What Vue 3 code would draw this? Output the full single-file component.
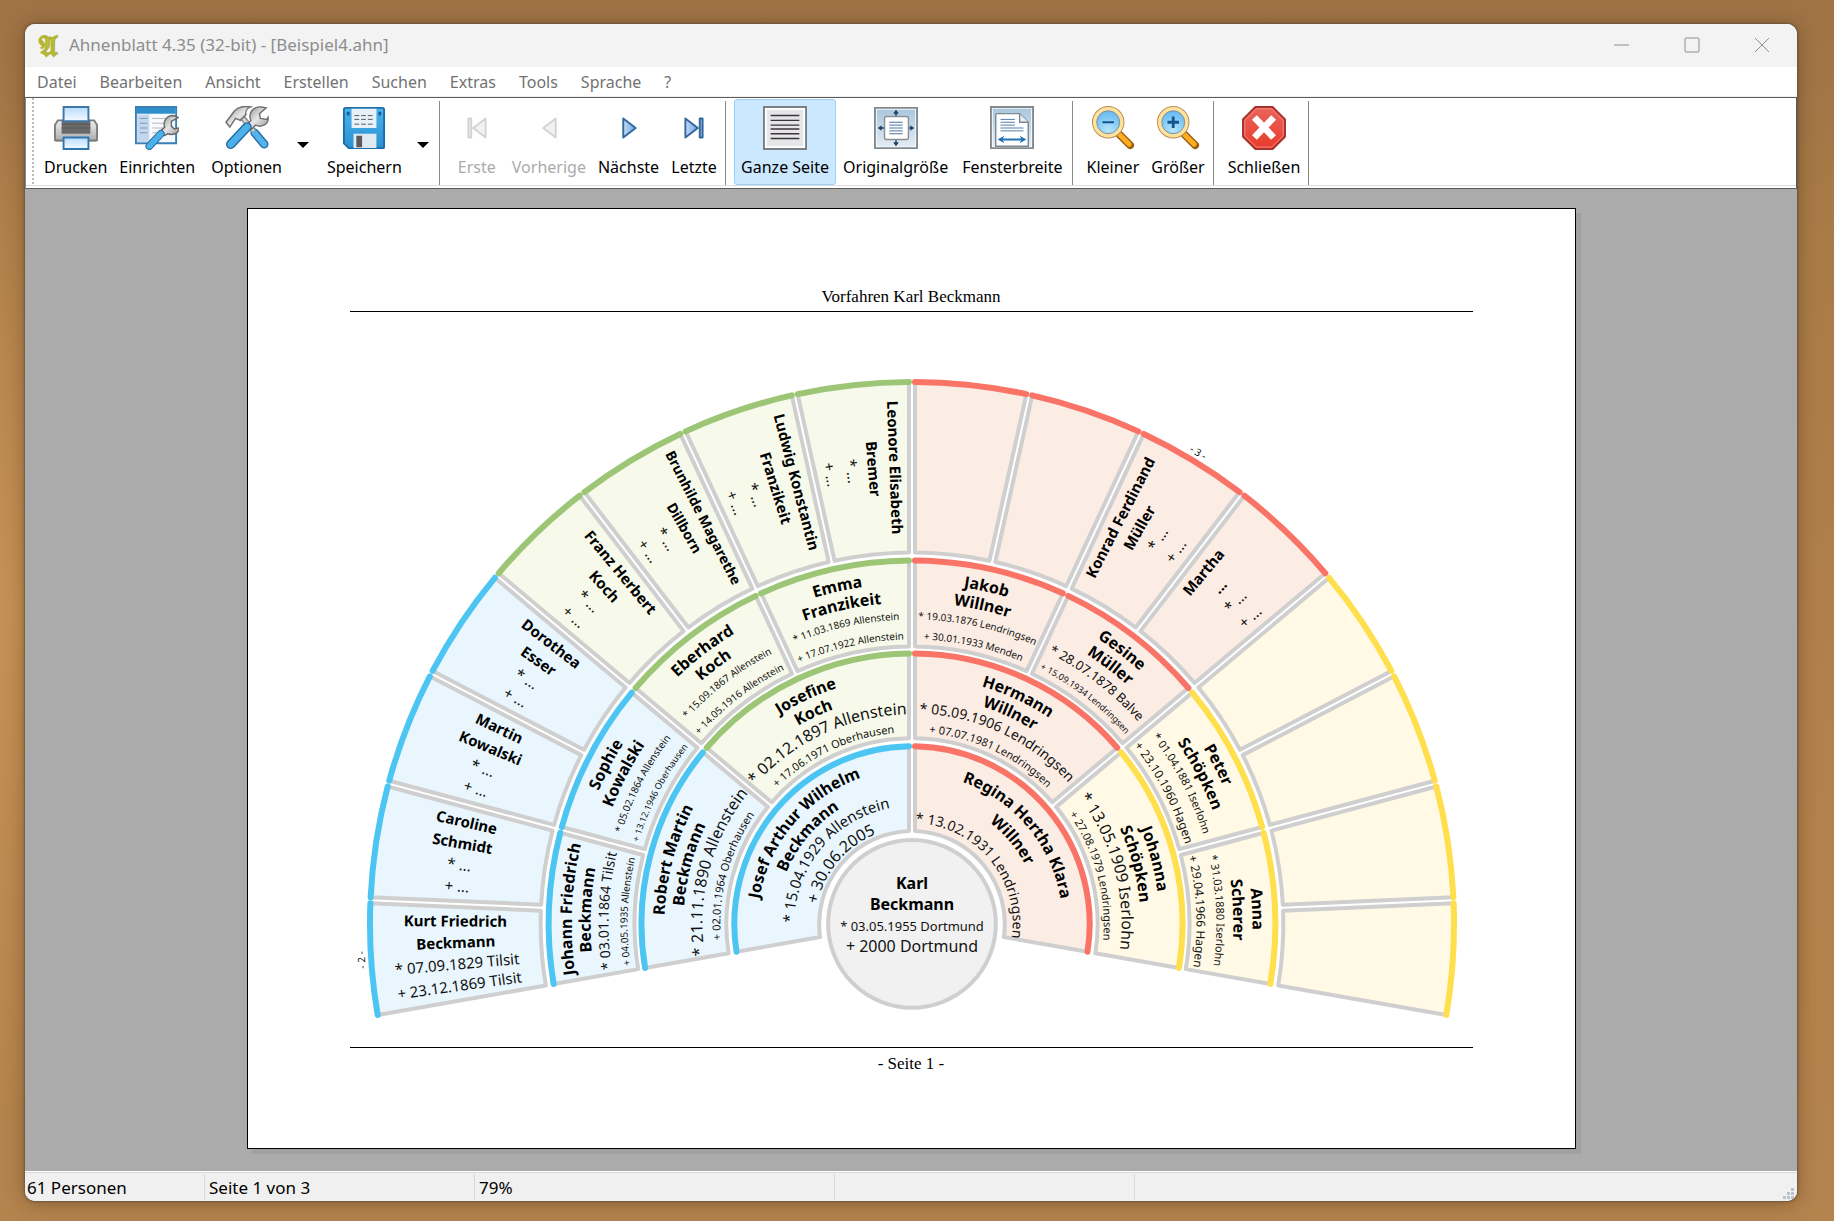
<script setup>
import {ref} from 'vue';

const menus = ['Datei', 'Bearbeiten', 'Ansicht', 'Erstellen', 'Suchen', 'Extras', 'Tools', 'Sprache', '?'];

const toolGroups = [
  [
    {id: 'print', label: 'Drucken'},
    {id: 'setup', label: 'Einrichten'},
    {id: 'options', label: 'Optionen', menu: true},
    {id: 'save', label: 'Speichern', menu: true},
  ],
  [
    {id: 'first', label: 'Erste', disabled: true},
    {id: 'previous', label: 'Vorherige', disabled: true},
    {id: 'next', label: 'Nächste'},
    {id: 'last', label: 'Letzte'},
  ],
  [
    {id: 'page', label: 'Ganze Seite', view: true},
    {id: 'original', label: 'Originalgröße', view: true},
    {id: 'width', label: 'Fensterbreite', view: true},
  ],
  [
    {id: 'smaller', label: 'Kleiner'},
    {id: 'larger', label: 'Größer'},
  ],
  [{id: 'close', label: 'Schließen'}],
];

const activeView = ref('page');

// [name lines, date lines, font sizes of the date lines, font size of the name]
const generations = [
  {
    inner: 93,
    outer: 178,
    people: [
      [['Josef Arthur Wilhelm', 'Beckmann'], ['* 15.04.1929 Allenstein', '+ 30.06.2005'], [15, 16]],
      [['Regina Hertha Klara', 'Willner'], ['* 13.02.1931 Lendringsen'], [14]],
    ],
  },
  {
    inner: 186,
    outer: 271,
    people: [
      [['Robert Martin', 'Beckmann'], ['* 21.11.1890 Allenstein', '+ 02.01.1964 Oberhausen'], [16, 11]],
      [['Josefine', 'Koch'], ['* 02.12.1897 Allenstein', '+ 17.06.1971 Oberhausen'], [16, 11]],
      [['Hermann', 'Willner'], ['* 05.09.1906 Lendringsen', '+ 07.07.1981 Lendringsen'], [14, 11]],
      [['Johanna', 'Schöpken'], ['* 13.05.1909 Iserlohn', '+ 27.08.1979 Lendringsen'], [16, 11]],
    ],
  },
  {
    inner: 278,
    outer: 364,
    people: [
      [['Johann Friedrich', 'Beckmann'], ['* 03.01.1864 Tilsit', '+ 04.05.1935 Allenstein'], [14, 10]],
      [['Sophie', 'Kowalski'], ['* 05.02.1864 Allenstein', '+ 13.12.1946 Oberhausen'], [10, 9]],
      [['Eberhard', 'Koch'], ['* 15.09.1867 Allenstein', '+ 14.05.1916 Allenstein'], [10, 10]],
      [['Emma', 'Franzikeit'], ['* 11.03.1869 Allenstein', '+ 17.07.1922 Allenstein'], [10, 10]],
      [['Jakob', 'Willner'], ['* 19.03.1876 Lendringsen', '+ 30.01.1933 Menden'], [10, 10]],
      [['Gesine', 'Müller'], ['* 28.07.1878 Balve', '+ 15.09.1934 Lendringsen'], [13, 9]],
      [['Peter', 'Schöpken'], ['* 01.04.1881 Iserlohn', '+ 23.10.1960 Hagen'], [11, 12]],
      [['Anna', 'Scherer'], ['* 31.03.1880 Iserlohn', '+ 29.04.1966 Hagen'], [11, 12]],
    ],
  },
  {
    inner: 372,
    outer: 543,
    radial: true,
    people: [
      [['Kurt Friedrich', 'Beckmann'], ['* 07.09.1829 Tilsit', '+ 23.12.1869 Tilsit'], [15, 15]],
      [['Caroline', 'Schmidt'], ['* ...', '+ ...'], [15, 15]],
      [['Martin', 'Kowalski'], ['* ...', '+ ...'], [15, 15]],
      [['Dorothea', 'Esser'], ['* ...', '+ ...'], [15, 15]],
      [['Franz Herbert', 'Koch'], ['* ...', '+ ...'], [15, 15]],
      [['Brunhilde Magarethe', 'Dillborn'], ['* ...', '+ ...'], [15, 15], 14],
      [['Ludwig Konstantin', 'Franzikeit'], ['* ...', '+ ...'], [15, 15]],
      [['Leonore Elisabeth', 'Bremer'], ['* ...', '+ ...'], [15, 15]],
      null,
      null,
      [['Konrad Ferdinand', 'Müller'], ['* ...', '+ ...'], [15, 15]],
      [['Martha', '...'], ['* ...', '+ ...'], [15, 15]],
      null,
      null,
      null,
      null,
    ],
  },
];

const FAN_START = -10;
const FAN_SWEEP = 200;
const GAP = 3;
const LINE_STEP = 2.7;

// Angles run clockwise, 0 is on the left and 90 at the top
function point(radius, angle) {
  const rad = (angle * Math.PI) / 180;
  return `${(-radius * Math.cos(rad)).toFixed(2)} ${(-radius * Math.sin(rad)).toFixed(2)}`;
}

function inset(radius) {
  return (Math.asin(GAP / radius) * 180) / Math.PI;
}

function arc(radius, from, to) {
  return `M ${point(radius, from)} A ${radius} ${radius} 0 0 1 ${point(radius, to)}`;
}

function sector(inner, outer, from, to) {
  const o = inset(outer);
  const i = inset(inner);
  return `${arc(outer, from + o, to - o)} L ${point(inner, to - i)} A ${inner} ${inner} 0 0 0 ${point(inner, from + i)} Z`;
}

function buildLines(person, gen, from, to) {
  if (!person) return [];
  const [names, dates, sizes, nameSize = gen.radial ? 15 : 16] = person;
  const lines = [
    ...names.map((text) => ({text, size: nameSize, bold: true})),
    ...dates.map((text, i) => ({text, size: sizes[i], bold: false})),
  ];
  const mid = (from + to) / 2;
  const offsets = lines.length === 3 ? [21, 44, 72] : [17, 36, 55, 75];
  return lines.map((line, i) => {
    const drop = Math.round(line.size * 0.36);
    if (gen.radial) {
      const shift = (1.5 - i) * LINE_STEP;
      const radius = (gen.inner + gen.outer) / 2;
      const transform = mid < 90
        ? `rotate(${mid + shift}) translate(${-radius} ${drop})`
        : `rotate(${mid - shift - 180}) translate(${radius} ${drop})`;
      return {...line, transform};
    }
    return {...line, path: arc(gen.outer - offsets[i] - drop, from - 5, to + 5)};
  });
}

const branches = ['blue', 'green', 'red', 'yellow'];

const cells = generations.flatMap((gen, g) => {
  const step = FAN_SWEEP / gen.people.length;
  return gen.people.map((person, n) => {
    const from = FAN_START + n * step;
    const to = from + step;
    const branch = g === 0 ? branches[n * 2] : branches[Math.floor((n * 4) / gen.people.length)];
    return {
      id: `cell-${g}-${n}`,
      branch,
      shape: sector(gen.inner, gen.outer, from, to),
      edge: arc(gen.outer, from + inset(gen.outer), to - inset(gen.outer)),
      lines: buildLines(person, gen, from, to),
    };
  });
});

const status = ['61 Personen', 'Seite 1 von 3', '79%', '', ''];
</script>

<template>
  <svg class="sprite" aria-hidden="true">
    <defs>
      <linearGradient id="g-paper" x1="0" y1="0" x2="0" y2="1">
        <stop offset="0" stop-color="#b9dcff"/>
        <stop offset="1" stop-color="#f4faff"/>
      </linearGradient>
      <linearGradient id="g-metal" x1="0" y1="0" x2="0" y2="1">
        <stop offset="0" stop-color="#f2f2f2"/>
        <stop offset="1" stop-color="#a9a9a9"/>
      </linearGradient>
      <linearGradient id="g-steel" x1="0" y1="0" x2="1" y2="1">
        <stop offset="0" stop-color="#8b8b8b"/>
        <stop offset="0.5" stop-color="#e6e6e6"/>
        <stop offset="1" stop-color="#9a9a9a"/>
      </linearGradient>
      <linearGradient id="g-blue" x1="0" y1="0" x2="0" y2="1">
        <stop offset="0" stop-color="#4cb4ee"/>
        <stop offset="1" stop-color="#2b8fd0"/>
      </linearGradient>
      <linearGradient id="g-frame" x1="0" y1="0" x2="0" y2="1">
        <stop offset="0" stop-color="#aac8de"/>
        <stop offset="1" stop-color="#e2ebf2"/>
      </linearGradient>
      <linearGradient id="g-nav" x1="0" y1="0" x2="1" y2="0">
        <stop offset="0" stop-color="#c3dcf8"/>
        <stop offset="1" stop-color="#6ea3e0"/>
      </linearGradient>
      <linearGradient id="g-red" x1="0" y1="0" x2="0" y2="1">
        <stop offset="0" stop-color="#e8655c"/>
        <stop offset="1" stop-color="#ea3a2a"/>
      </linearGradient>
      <radialGradient id="g-lens" cx="0.5" cy="0.8" r="0.8">
        <stop offset="0" stop-color="#b5e6ff"/>
        <stop offset="1" stop-color="#5bb4ee"/>
      </radialGradient>
    </defs>

    <symbol id="icon-print" viewBox="0 0 46 46">
      <path d="M4 14h38l4 6v15a2 2 0 0 1-2 2H2a2 2 0 0 1-2-2V20z" fill="url(#g-metal)"/>
      <path d="M4 15h38l3 5v15a1 1 0 0 1-1 1H2a1 1 0 0 1-1-1V20z" fill="none" stroke="#7d7d7d" stroke-width="2"/>
      <path d="M8 15h30v14H8z" fill="#6a6a6a"/>
      <path d="M8 19h30M8 23h30" stroke="#585858"/>
      <path d="M10 1h26v15H10z" fill="url(#g-paper)" stroke="#3d76a8" stroke-width="2"/>
      <path d="M10 33h26v12H10z" fill="url(#g-paper)" stroke="#2f75ae" stroke-width="2"/>
    </symbol>

    <symbol id="icon-wrench-small" viewBox="0 0 46 46">
      <path d="M27 26 31 22c-2-6 2-12 9-12l5 2-7 4v5l3 3 5-1c0 6-7 8-12 6l-3 2z" fill="url(#g-steel)" stroke="#686868" stroke-width="1.5"/>
      <path d="M27 29 15 42" stroke="#226ca3" stroke-width="8" stroke-linecap="round"/>
      <path d="M27 29 15 42" stroke="#4db0e8" stroke-width="6" stroke-linecap="round"/>
    </symbol>

    <symbol id="icon-setup" viewBox="0 0 46 46">
      <path d="M1 1h42v38H1z" fill="#f6fafe" stroke="#3a7fb2" stroke-width="2"/>
      <path d="M2 2h40v6H2z" fill="#2e8fcc"/>
      <path d="M2 9h13v29H2z" fill="#c3d8ee"/>
      <path d="M5 13h8M5 18h8M5 23h8M5 28h8" stroke="#7b93a8"/>
      <path d="M18 13h20M18 18h14M18 23h11M18 28h8" stroke="#b4b4b4"/>
      <use href="#icon-wrench-small"/>
    </symbol>

    <symbol id="icon-options" viewBox="0 0 46 46">
      <path d="M31 28 41 40" stroke="#2570a8" stroke-width="9" stroke-linecap="round"/>
      <path d="M31 28 41 40" stroke="#53b3ea" stroke-width="6" stroke-linecap="round"/>
      <path d="M18 12 30 26" stroke="#8a8a8a" stroke-width="6"/>
      <path d="M18 12 30 26" stroke="#d5d5d5" stroke-width="3"/>
      <path d="M1 17 10 5C15 0 22 0 27 1c-5 2-6 4-5 8l-6 6-5-2-6 9z" fill="url(#g-steel)" stroke="#6e6e6e" stroke-width="1.5"/>
      <path d="M23 20 27 15C24 8 29 0 38 1l5 1-7 6 1 5 7 1 1-2c1 7-7 11-13 8l-4 4z" fill="url(#g-steel)" stroke="#6e6e6e" stroke-width="1.5"/>
      <path d="M23 22 6 40" stroke="#226ca3" stroke-width="10" stroke-linecap="round"/>
      <path d="M23 22 6 40" stroke="#4db0e8" stroke-width="7" stroke-linecap="round"/>
    </symbol>

    <symbol id="icon-save" viewBox="0 0 46 46">
      <path d="M4 2h38q2 0 2 2v39q0 1-1 1H7l-5-5V4q0-2 2-2z" fill="url(#g-blue)" stroke="#1d6ea8" stroke-width="2"/>
      <path d="M10 3h26v20H10z" fill="#e6f1f9"/>
      <path d="M13 10h20M13 14h20M13 19h20" stroke="#565656" stroke-dasharray="5 2"/>
      <path d="M5 6h3v4H5zM38 6h3v4h-3z" fill="#175f95"/>
      <path d="M12 29h24v15H12z" fill="#dfe9f2"/>
      <path d="M15 31h6v12h-6z" fill="#5a5a5a"/>
    </symbol>

    <symbol id="icon-first" viewBox="0 0 46 46">
      <g fill="#f1f1f1" stroke="#d3d3d3" stroke-width="2" stroke-linejoin="round">
        <path d="M14 13h3v20h-3z"/>
        <path d="M32 13v20L19 23z"/>
      </g>
    </symbol>

    <symbol id="icon-previous" viewBox="0 0 46 46">
      <path d="M30 13v20L17 23z" fill="#f1f1f1" stroke="#d3d3d3" stroke-width="2" stroke-linejoin="round"/>
    </symbol>

    <symbol id="icon-next" viewBox="0 0 46 46">
      <path d="M17 13v20l13-10z" fill="url(#g-nav)" stroke="#35679f" stroke-width="2" stroke-linejoin="round"/>
    </symbol>

    <symbol id="icon-last" viewBox="0 0 46 46">
      <g fill="url(#g-nav)" stroke="#35679f" stroke-width="2" stroke-linejoin="round">
        <path d="M14 13v20l13-10z"/>
        <path d="M29 13h3v20h-3z" fill="#8cb8ea"/>
      </g>
    </symbol>

    <symbol id="icon-page" viewBox="0 0 46 46">
      <path d="M1 1h44v44H1z" fill="#fff" stroke="#7b7f82" stroke-width="2"/>
      <path d="M4 4h38v38H4z" fill="#e6e6e6"/>
      <path d="M8 10h30M8 15h30M8 20h30M8 24h30M8 29h30M8 34h30" stroke="#3b3440" stroke-width="1.5"/>
    </symbol>

    <symbol id="icon-original" viewBox="0 0 46 46">
      <path d="M1 2h44v42H1z" fill="#f4f8fb" stroke="#84898d" stroke-width="2"/>
      <path d="M3 4h40v38H3z" fill="url(#g-frame)"/>
      <path d="M23 5v36M5 23h36" stroke="#1c3f63" stroke-width="1.5"/>
      <path d="M23 4l3 4h-6zM23 42l3-4h-6zM4 23l4-3v6zM42 23l-4-3v6z" fill="#1c3f63"/>
      <rect x="11" y="11" width="25" height="24" rx="2" fill="#fff" stroke="#8a8f93" stroke-width="1.5"/>
      <path d="M16 17h14M16 20h14M16 23h14M16 26h14M16 29h14" stroke="#426f9c"/>
    </symbol>

    <symbol id="icon-width" viewBox="0 0 46 46">
      <path d="M1 1h44v43H1z" fill="#f4f8fb" stroke="#84898d" stroke-width="2"/>
      <path d="M3 3h40v39H3z" fill="url(#g-frame)"/>
      <path d="M6 42V9q0-1 1-1h24l9 9v25z" fill="#fff" stroke="#7c8a96" stroke-width="1.5"/>
      <path d="M31 8v9h9" fill="#e8eef3" stroke="#7c8a96" stroke-width="1.5"/>
      <path d="M11 14h15M11 17h15M11 20h15M11 23h24M11 26h24" stroke="#4a79a6"/>
      <path d="M11 35h24" stroke="#2070b4" stroke-width="2"/>
      <path d="M8 35l7-4-2 4 2 4zM38 35l-7-4 2 4-2 4z" fill="#2070b4"/>
    </symbol>

    <symbol id="icon-lens" viewBox="0 0 46 46">
      <path d="M30 30 41 41" stroke="#9b5f14" stroke-width="8" stroke-linecap="round"/>
      <path d="M30 30 40 40" stroke="#ffad22" stroke-width="5" stroke-linecap="round"/>
      <circle cx="18" cy="17" r="15" fill="none" stroke="#b78d50" stroke-width="4"/>
      <circle cx="18" cy="17" r="14" fill="url(#g-lens)" stroke="#ffe2a0" stroke-width="4"/>
      <circle cx="18" cy="17" r="12" fill="none" stroke="#7e8e93"/>
    </symbol>

    <symbol id="icon-smaller" viewBox="0 0 46 46">
      <use href="#icon-lens"/>
      <path d="M12 17h12" stroke="#14568e" stroke-width="2"/>
    </symbol>

    <symbol id="icon-larger" viewBox="0 0 46 46">
      <use href="#icon-lens"/>
      <path d="M12 17h12M18 11v12" stroke="#14568e" stroke-width="3"/>
    </symbol>

    <symbol id="icon-close" viewBox="0 0 46 46">
      <path d="M14 1h18l13 13v18L32 45H14L1 32V14z" fill="url(#g-red)" stroke="#a8322b" stroke-width="2"/>
      <path d="M15 3h16l12 12v16L31 43H15L3 31V15z" fill="none" stroke="#f08e86"/>
      <path d="M13 12 33 33M33 12 13 33" stroke="#fff" stroke-width="7"/>
    </symbol>
  </svg>

  <main class="desktop">
    <div class="window">
      <header class="title-bar">
        <svg class="app-icon" viewBox="0 0 32 32" aria-hidden="true">
          <text x="16" y="27" text-anchor="middle">𝔄</text>
        </svg>
        <h1 class="window-title">Ahnenblatt 4.35 (32-bit) - [Beispiel4.ahn]</h1>
        <button class="caption-button" type="button" aria-label="Minimieren">
          <svg viewBox="0 0 16 16"><path d="M0 8h15"/></svg>
        </button>
        <button class="caption-button" type="button" aria-label="Maximieren">
          <svg viewBox="0 0 16 16"><rect x="1" y="1" width="14" height="14" rx="1"/></svg>
        </button>
        <button class="caption-button" type="button" aria-label="Fenster schließen">
          <svg viewBox="0 0 16 16"><path d="M1 1l14 14M15 1L1 15"/></svg>
        </button>
      </header>

      <nav class="menu-bar">
        <button v-for="menu in menus" :key="menu" class="menu" type="button">{{ menu }}</button>
      </nav>

      <div class="toolbar" role="toolbar">
        <div v-for="(group, index) in toolGroups" :key="index" class="tool-group">
          <template v-for="tool in group" :key="tool.id">
            <button
                :class="['tool', {active: tool.view && tool.id === activeView, view: tool.view, split: tool.menu}]"
                type="button"
                :disabled="tool.disabled"
                @click="tool.view && (activeView = tool.id)"
            >
              <svg class="tool-icon"><use :href="`#icon-${tool.id}`"/></svg>
              <span>{{ tool.label }}</span>
            </button>
            <button v-if="tool.menu" class="tool-menu" type="button" :aria-label="`${tool.label} Menü`">
              <svg viewBox="0 0 12 6"><path d="M0 0h12L6 6z"/></svg>
            </button>
          </template>
        </div>
      </div>

      <section class="preview">
        <article class="sheet">
          <h2 class="sheet-header">Vorfahren Karl Beckmann</h2>
          <svg class="fan" viewBox="-563 -613 1125 736">
            <defs>
              <template v-for="cell in cells" :key="cell.id">
                <template v-for="(line, i) in cell.lines" :key="i">
                  <path v-if="line.path" :id="`${cell.id}-${i}`" :d="line.path"/>
                </template>
              </template>
            </defs>
            <path v-for="cell in cells" :key="cell.id" :class="['cell', cell.branch]" :d="cell.shape"/>
            <path v-for="cell in cells" :key="cell.id" :class="['edge', cell.branch]" :d="cell.edge"/>
            <template v-for="cell in cells" :key="cell.id">
              <text
                  v-for="(line, i) in cell.lines"
                  :key="i"
                  :class="{bold: line.bold}"
                  :font-size="line.size"
                  :transform="line.transform"
              >
                <textPath v-if="line.path" :href="`#${cell.id}-${i}`" startOffset="50%">{{ line.text }}</textPath>
                <template v-else>{{ line.text }}</template>
              </text>
            </template>

            <circle class="root" r="84"/>
            <text class="bold" y="-35" font-size="16">Karl</text>
            <text class="bold" y="-14" font-size="16">Beckmann</text>
            <text y="7" font-size="13">* 03.05.1955 Dortmund</text>
            <text y="28" font-size="16">+ 2000 Dortmund</text>

            <!-- continuation pages -->
            <text font-size="10" transform="rotate(-93.75) translate(0 -549)">- 2 -</text>
            <text font-size="10" transform="rotate(31.25) translate(0 -549)">- 3 -</text>
          </svg>
          <p class="sheet-footer">- Seite 1 -</p>
        </article>
      </section>

      <footer class="status-bar">
        <span v-for="(text, i) in status" :key="i" class="status">{{ text }}</span>
        <svg class="grip" viewBox="0 0 12 12" aria-hidden="true">
          <path d="M8 0h3v3H8zM4 4h3v3H4zM8 4h3v3H8zM0 8h3v3H0zM4 8h3v3H4zM8 8h3v3H8z"/>
        </svg>
      </footer>
    </div>
  </main>
</template>

<style>
body {
  margin: 0;
}
</style>

<style scoped>
.sprite {
  position: absolute;
  width: 0;
  height: 0;
}

.desktop {
  box-sizing: border-box;
  display: flex;
  min-height: 100vh;
  padding: 24px 37px 20px 25px;
  font-family: "Noto Sans", "Open Sans", sans-serif;
  font-size: 16px;
  background:
    radial-gradient(ellipse at 0 50%, rgba(206, 152, 90, 0.7), rgba(206, 152, 90, 0) 60%),
    linear-gradient(to bottom, #9f7345, #a97b47 20%, #b3814b 60%, #b4844e);
}

.window {
  flex: 1;
  display: flex;
  flex-direction: column;
  min-width: 0;
  border-radius: 10px;
  overflow: hidden;
  background: #fff;
  box-shadow: 0 0 2px 1px rgba(80, 70, 60, 0.6), 0 2px 20px rgba(60, 35, 10, 0.4);
}

button {
  margin: 0;
  border: none;
  background: none;
  font: inherit;
  color: inherit;
}

.title-bar {
  display: flex;
  align-items: center;
  box-sizing: border-box;
  height: 43px;
  padding: 0 0 2px 7px;
  background: #f3f3f3;
  color: #8d8d8d;
}

.app-icon {
  width: 32px;
  height: 32px;
}

.app-icon text {
  font: bold 28px "DejaVu Sans", sans-serif;
  fill: #d6da0c;
  stroke: #b0b53a;
  stroke-width: 1;
}

.window-title {
  flex: 1;
  margin: 0 0 0 5px;
  font-size: 17px;
  font-weight: 400;
}

.caption-button {
  display: grid;
  place-items: center;
  width: 70px;
  height: 100%;
  padding: 0;
}

.caption-button svg {
  width: 16px;
  height: 16px;
  fill: none;
  stroke: #8f8f8f;
  stroke-width: 1;
}

.menu-bar {
  display: flex;
  gap: 1px;
  height: 29px;
  padding-left: 1px;
  border-bottom: 1px solid #f0f0f0;
  color: #727272;
}

.menu {
  padding: 0 11px;
}

.toolbar {
  display: flex;
  height: 92px;
  box-sizing: border-box;
  padding: 1px 0 3px 12px;
  border: 1px solid #5c5c5c;
  border-left-color: #8a8a8a;
  box-shadow: inset 0 -2px #fff, inset 0 -3px #dcdcdc;
  background: repeating-linear-gradient(to bottom, #b9b9b9 0 2px, #fff 2px 4px) 6px 0 / 2px 86px no-repeat;
}

.tool-group {
  display: flex;
  align-items: stretch;
}

/* separator line that closes every group */
.tool-group::after {
  content: "";
  width: 1px;
  margin: 2px 8px 0 2px;
  background: #8a8a8a;
}

.tool {
  display: flex;
  flex-direction: column;
  align-items: center;
  gap: 6px;
  padding: 6px 5px;
  border: 1px solid transparent;
  border-radius: 3px;
  line-height: 22px;
  white-space: nowrap;
}

.tool.split {
  padding: 6px 7px 6px 9px;
}

.tool.view {
  padding: 6px;
}

.tool.active {
  border-color: #99d1ff;
  background: #cce8ff;
}

.tool:disabled {
  color: #ababab;
}

.tool-icon {
  width: 46px;
  height: 46px;
}

.tool-menu {
  width: 27px;
  padding: 0;
}

.tool-menu svg {
  width: 12px;
  height: 6px;
}

.preview {
  flex: 1;
  display: flex;
  justify-content: center;
  padding: 19px 0 22px;
  background: #ababab;
}

.sheet {
  display: flex;
  flex-direction: column;
  box-sizing: border-box;
  width: 75%;
  padding: 0 102px;
  border: 1px solid #000;
  background: #fff;
  box-shadow: 5px 5px #a0a0a0;
}

.sheet-header,
.sheet-footer {
  margin: 0;
  font: 400 17px/20px "Liberation Serif", serif;
  text-align: center;
}

.sheet-header {
  padding: 78px 0 4px;
  border-bottom: 1px solid #000;
}

.sheet-footer {
  padding-top: 6px;
  border-top: 1px solid #000;
}

.fan {
  display: block;
  width: 100%;
  overflow: visible;
}

.fan text {
  text-anchor: middle;
  font-family: "Noto Sans", sans-serif;
  fill: #111;
}

.fan .bold {
  font-weight: 700;
  fill: #000;
}

.cell {
  stroke: #cfcfcf;
  stroke-width: 4;
  stroke-linejoin: round;
}

.edge {
  stroke-width: 6;
  stroke-linecap: round;
}

.cell.blue {
  fill: #e9f6fe;
}

.cell.green {
  fill: #f7faea;
}

.cell.red {
  fill: #fbece4;
}

.cell.yellow {
  fill: #fff9e5;
}

.fan .edge {
  fill: none;
}

.edge.blue {
  stroke: #4cc5f3;
}

.edge.green {
  stroke: #9cc676;
}

.edge.red {
  stroke: #f97466;
}

.edge.yellow {
  stroke: #ffdf4c;
}

.root {
  fill: #f1f1f1;
  stroke: #cfcfcf;
  stroke-width: 4;
}

.status-bar {
  display: grid;
  grid-template-columns: 180px 270px 360px 300px 1fr 14px;
  align-items: center;
  height: 29px;
  border-top: 1px solid #fff;
  background: #f0f0f0;
  box-shadow: inset 0 1px #d9d9d9;
  font-size: 17px;
}

.status {
  height: 26px;
  padding: 0 2px;
  border-right: 1px solid #d9d9d9;
  line-height: 28px;
}

.status + .status {
  padding-left: 4px;
}

.status:nth-child(5) {
  border-right: none;
}

.grip {
  align-self: end;
  width: 12px;
  height: 12px;
  margin-bottom: 1px;
  fill: #bcc3c8;
}
</style>
